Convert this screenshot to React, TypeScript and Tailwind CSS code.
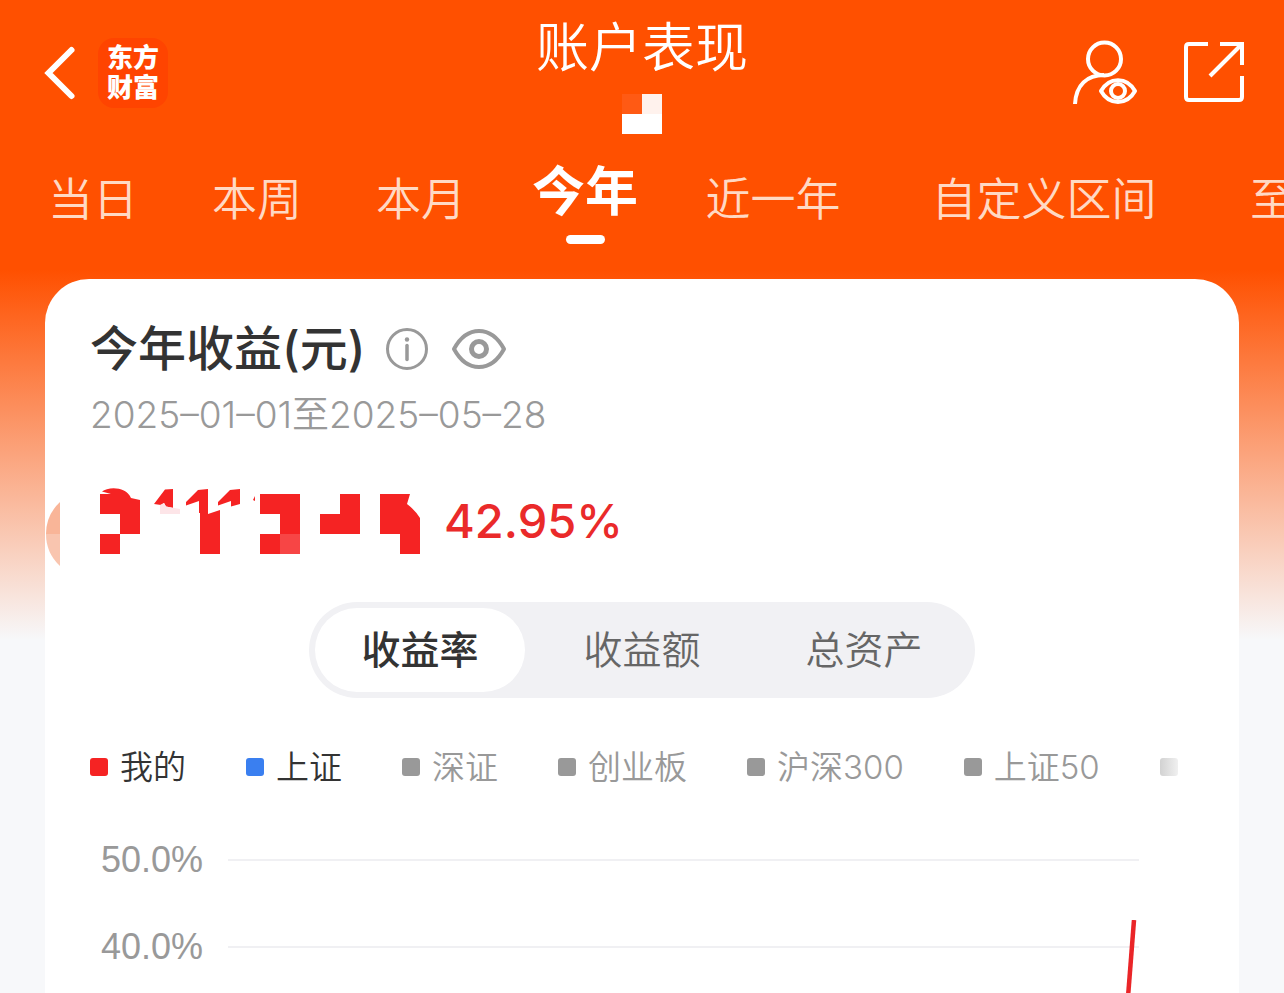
import React, { useState } from "react";

interface LegendItem {
  label: string;
  color: string;
  active: boolean;
}

interface Tab {
  label: string;
  width: string;
}

const tabs: Tab[] = [
  { label: "当日", width: "w-[164px]" },
  { label: "本周", width: "w-[164px]" },
  { label: "本月", width: "w-[164px]" },
  { label: "今年", width: "w-[164px]" },
  { label: "近一年", width: "w-[212px]" },
  { label: "自定义区间", width: "w-[330px]" },
  { label: "至今", width: "w-[172px]" },
];

const segments = ["收益率", "收益额", "总资产"];

const legend: LegendItem[] = [
  { label: "我的", color: "bg-[#f52323]", active: true },
  { label: "上证", color: "bg-[#3a7ff0]", active: true },
  { label: "深证", color: "bg-[#999999]", active: false },
  { label: "创业板", color: "bg-[#999999]", active: false },
  { label: "沪深300", color: "bg-[#999999]", active: false },
  { label: "上证50", color: "bg-[#999999]", active: false },
];

const ticks = ["50.0%", "40.0%"];

const Header: React.FC = () => (
  <header className="grid h-[156px] grid-cols-[1fr_auto_1fr] items-start px-[38px]">
    <div className="flex items-center gap-[22px] pt-[38px]">
      <button type="button" aria-label="返回">
        <svg width="38" height="70" viewBox="-6 0 38 70" fill="none" stroke="#fff" strokeWidth="6">
          <path d="M27.500 12 4.500 35 27.500 58" strokeLinecap="round" />
        </svg>
      </button>
      <div className="flex h-[70px] w-[70px] flex-col items-center justify-center rounded-2xl bg-[#ff4400] text-[26px] font-black leading-[30px]">
        <span>东方</span>
        <span>财富</span>
      </div>
    </div>
    <div className="flex flex-col items-center gap-[14px] pt-4">
      <h1 className="text-[53px] font-[350] leading-[64px]">账户表现</h1>
      <svg width="40" height="40" viewBox="0 0 40 40" shapeRendering="crispEdges">
        <path fill="#ff5a14" d="M0 0h20v20H0z" />
        <path fill="#fff2ed" d="M20 0h20v20H20z" />
        <path fill="#fff" d="M0 20h40v20H0z" />
      </svg>
    </div>
    <div className="flex items-center justify-end gap-[44px] pt-[38px]">
      <button type="button" aria-label="账户">
        <svg width="68" height="68" viewBox="0 0 68 68" fill="none" stroke="#fff" strokeWidth="4">
          <circle cx="34.500" cy="21" r="16.500" />
          <path d="M5 66C6 47 17 37 34 37" />
          <path d="M31 53C39 38.500 57 38.500 65 53C57 67.500 39 67.500 31 53Z" strokeLinejoin="round" />
          <circle cx="48" cy="53" r="7" />
        </svg>
      </button>
      <button type="button" aria-label="分享">
        <svg width="64" height="68" viewBox="0 0 64 68" fill="none" stroke="#fff" strokeWidth="4">
          <path d="M26 6H7Q4 6 4 9V59Q4 62 7 62H57Q60 62 60 59V38" />
          <path d="M38 6H60V27" />
          <path d="M28 38 59 7" />
        </svg>
      </button>
    </div>
  </header>
);

// Amount is masked with 20px mosaic tiles
const MaskedAmount: React.FC = () => (
  <svg width="320" height="80" viewBox="0 0 320 80" fill="#f52323">
    <path d="M2 10.500C8 5.500 26 5 31 17L40 19V53H20V33H0V13H11ZM0 53H20V73H0Z" />
    <path d="M54 23 65 8.500 73 8V27L66 25.500 64 22 61 24Z" />
    <path fill="#fde5e8" d="M60 24 64 22 66 25.500 80 28V33H60Z" />
    <path d="M86 24.500V21L98 9 108 8V33L120 29V73H100V32H99V20Z" />
    <path d="M118 24.500V21L130 9 140 8V23L131 25.500V20Z" />
    <path d="M153 19 155 15V20Z" />
    <path d="M160 13H200V73H160V53H180V33H160Z" />
    <path fill="#f74545" d="M180 53H200V73H180Z" />
    <path d="M240 13H260V53H220V33H240Z" />
    <path d="M280 13H310L307 23Q315 29 320 37V73H300V53H280Z" />
  </svg>
);

const Chart: React.FC = () => (
  <div className="relative mt-[25px] flex-1 overflow-hidden pr-[55px]">
    {ticks.map((tick) => (
      <div key={tick} className="flex h-[87px] items-center">
        <span className="w-[113px] text-right font-['Liberation_Sans',sans-serif] text-[36px] leading-[48px] text-[#999999]">
          {tick}
        </span>
        <div className="ml-[25px] h-[2px] flex-1 bg-[#f0f0f3]" />
      </div>
    ))}
    <svg
      className="absolute right-[55px] top-[104px]"
      width="14"
      height="90"
      viewBox="0 0 14 90"
      fill="none"
    >
      <path d="M9 0 2 90" stroke="#ea2528" strokeWidth="4.500" />
    </svg>
  </div>
);

const App: React.FC = () => {
  const [activeTab, setActiveTab] = useState<string>("今年");
  const [segment, setSegment] = useState<string>("收益率");

  return (
    <div className="flex h-screen flex-col overflow-hidden bg-[#f7f8fa] bg-[linear-gradient(to_bottom,#ff5000_270px,#f7f8fa_640px)] font-['Inter','Noto_Sans_CJK_SC',sans-serif] text-white">
      <Header />
      <nav className="flex h-[88px] shrink-0 overflow-hidden pl-[11px]">
        {tabs.map((tab) => (
          <button
            key={tab.label}
            type="button"
            onClick={() => setActiveTab(tab.label)}
            className={`flex shrink-0 flex-col items-center whitespace-nowrap ${tab.width}`}
          >
            {activeTab === tab.label ? (
              <>
                <span className="text-[53px] font-bold leading-[72px]">{tab.label}</span>
                <span className="mt-[7px] h-[9px] w-[39px] rounded-full bg-white" />
              </>
            ) : (
              <span className="text-[45px] font-[350] leading-[88px] text-[#ffd9c4]">
                {tab.label}
              </span>
            )}
          </button>
        ))}
      </nav>

      <main className="relative mx-[45px] mt-[35px] flex flex-1 flex-col rounded-t-[44px] bg-white px-[45px] pt-[38px] text-[#333333]">
        <svg className="absolute left-0 top-[221px]" width="15" height="68" viewBox="0 0 15 68">
          <path fill="#f9b598" d="M15 2Q1 15 1 34H15Z" />
          <path fill="#f9c5af" d="M1 34Q1 53 15 66V34Z" />
        </svg>

        <div className="flex h-16 items-center">
          <h2 className="text-[48px] font-medium leading-[64px]">今年收益(元)</h2>
          <button type="button" aria-label="说明" className="ml-5">
            <svg width="44" height="44" viewBox="0 0 44 44" fill="none" stroke="#999" strokeWidth="3">
              <circle cx="22" cy="22" r="19.500" />
              <path d="M22 18.500V32.500" strokeWidth="3.500" strokeLinecap="round" />
              <circle cx="22" cy="12.500" r="2.200" fill="#999" stroke="none" />
            </svg>
          </button>
          <button type="button" aria-label="隐藏金额" className="ml-[22px]">
            <svg width="56" height="44" viewBox="0 0 56 44" fill="none" stroke="#999" strokeWidth="4">
              <path d="M3 22C16 -2 40 -2 53 22C40 46 16 46 3 22Z" strokeLinejoin="round" />
              <circle cx="28" cy="22" r="7.500" strokeWidth="5" />
            </svg>
          </button>
        </div>
        <p className="mt-[10px] text-[37px] font-[350] leading-[48px] text-[#999999]">
          2025–01–01至2025–05–28
        </p>

        <div className="mt-[42px] flex items-center gap-6 pl-[10px]">
          <MaskedAmount />
          <span className="text-[47px] font-medium leading-[80px] text-[#ea2a2a]">42.95%</span>
        </div>

        <div className="mt-[41px] flex h-24 w-[666px] shrink-0 gap-3 self-center rounded-[48px] bg-[#f1f1f4] p-[6px]">
          {segments.map((item) => (
            <button
              key={item}
              type="button"
              onClick={() => setSegment(item)}
              className={`flex-1 rounded-[42px] text-[39px] ${
                segment === item
                  ? "bg-white font-medium text-[#333333]"
                  : "font-[350] text-[#666666]"
              }`}
            >
              {item}
            </button>
          ))}
        </div>

        <div className="mt-[45px] flex gap-[60px] overflow-hidden">
          {legend.map((item) => (
            <button
              key={item.label}
              type="button"
              className={`flex shrink-0 items-center gap-3 text-[33px] font-[350] leading-[48px] ${
                item.active ? "text-[#333333]" : "text-[#999999]"
              }`}
            >
              <span className={`h-[18px] w-[18px] rounded-[3px] ${item.color}`} />
              {item.label}
            </button>
          ))}
          {/* next entry fades out at the edge */}
          <span className="h-[18px] w-[18px] shrink-0 self-center rounded-[3px] bg-linear-to-r from-[#d2d2d2] to-[#f0f0f0]" />
        </div>

        <Chart />
      </main>
    </div>
  );
};

export default App;
